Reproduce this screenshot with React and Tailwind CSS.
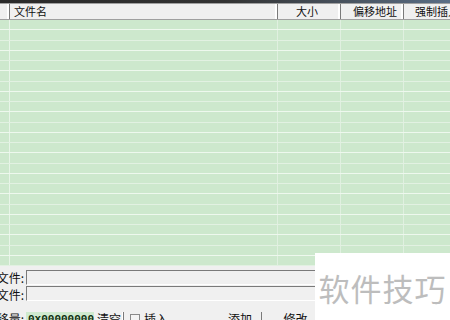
import React from "react";

const cols = [
  { w: "w-[10px]", label: "" },
  { w: "w-[268px]", label: "文件名", align: "justify-start pl-[4px]" },
  { w: "w-[63px]", label: "大小", align: "justify-end pr-[22px]" },
  { w: "w-[63px]", label: "偏移地址", align: "justify-start pl-[12px]" },
  { w: "w-[60px]", label: "强制插入", align: "justify-start pl-[11px]" },
];

const font = { fontFamily: '"Noto Sans CJK SC", "Noto Sans", sans-serif' };

export default function App() {
  const rows = Array.from({ length: 24 });
  return (
    <div className="relative w-[450px] h-[320px] overflow-hidden bg-[#f0f0f0] text-[#111]" style={font}>
      {/* title strip */}
      <div className="h-[3px] bg-gradient-to-r from-[#2a2a2a] via-[#333] to-[#5a6e86]" />
      <div className="h-[1px] bg-[#a0a0a0]" />
      {/* header */}
      <div className="flex h-[16px] bg-[#f0f0f0] border-b border-[#a0a0a0] text-[11px] leading-none">
        {cols.map((c, i) => (
          <div
            key={i}
            className={`${c.w} shrink-0 flex items-center ${c.align || ""} border-r border-[#7a7a7a] shadow-[inset_-2px_0_0_#ffffff]`}
          >
            {c.label}
          </div>
        ))}
      </div>
      {/* list */}
      <div className="h-[246px] bg-[#cde8cd] overflow-hidden relative">
        <div className="flex flex-col">
          {rows.map((_, i) => (
            <div key={i} className={`h-[10.25px] shrink-0 flex border-b ${i % 2 ? "border-[#e2f1e2]" : "border-[#eef8ee]"}`}>
              <div className="w-[10px] shrink-0 border-r border-[#e8f4e8]" />
              <div className="w-[268px] shrink-0 border-r border-[#e0f0e0]" />
              <div className="w-[63px] shrink-0 border-r border-[#e0f0e0]" />
              <div className="w-[63px] shrink-0 border-r border-[#e0f0e0]" />
              <div className="flex-1" />
            </div>
          ))}
        </div>
      </div>
      {/* bottom panel */}
      <div className="flex flex-col pt-[4px] text-[12px] leading-none">
        <div className="flex items-center h-[15px]">
          <div className="w-[26px] shrink-0 overflow-hidden flex justify-end pr-[2px]">
            <span className="whitespace-nowrap">文件:</span>
          </div>
          <div className="w-[300px] h-[15px] border-t border-l border-[#7a7a7a] border-b border-b-[#ffffff] bg-[#f0f0f0]" />
        </div>
        <div className="flex items-center h-[15px] mt-[1px]">
          <div className="w-[26px] shrink-0 overflow-hidden flex justify-end pr-[2px] pt-[2px]">
            <span className="whitespace-nowrap">源文件:</span>
          </div>
          <div className="w-[300px] h-[15px] border-t border-l border-[#7a7a7a] border-b border-b-[#ffffff] bg-[#f0f0f0]" />
        </div>
        <div className="flex items-center h-[14px] mt-[11px]">
          <div className="w-[26px] shrink-0 overflow-hidden flex justify-end pr-[2px]">
            <span className="whitespace-nowrap">偏移量:</span>
          </div>
          <div
            className="w-[68px] shrink-0 h-[14px] bg-[#cfeacf] flex items-center pl-[2px] text-[11px] font-bold text-[#103010]"
            style={{ fontFamily: '"Liberation Mono", monospace' }}
          >
            0x00000000
          </div>
          <div className="ml-[3px] h-[14px] flex items-center pr-[2px] border-r border-[#7a7a7a] shadow-[inset_-1px_0_0_#fff]">清空</div>
          <div className="ml-[6px] w-[10px] h-[10px] border border-[#8a8a8a] bg-[#f4f4f4]" />
          <div className="ml-[4px]">插入</div>
          <div className="ml-[51px] w-[43px] h-[14px] flex items-center justify-center border-r border-[#7a7a7a]">添加</div>
          <div className="ml-[13px] w-[42px] h-[14px] flex items-center justify-center border-r border-[#7a7a7a]">修改</div>
        </div>
      </div>
      {/* watermark */}
      <div className="absolute left-[315px] top-[253px] w-[135px] h-[67px] bg-white flex items-center justify-center">
        <span className="text-[31px] leading-none text-[#bdbdbd] tracking-[1px] mt-[1px]">软件技巧</span>
      </div>
    </div>
  );
}
